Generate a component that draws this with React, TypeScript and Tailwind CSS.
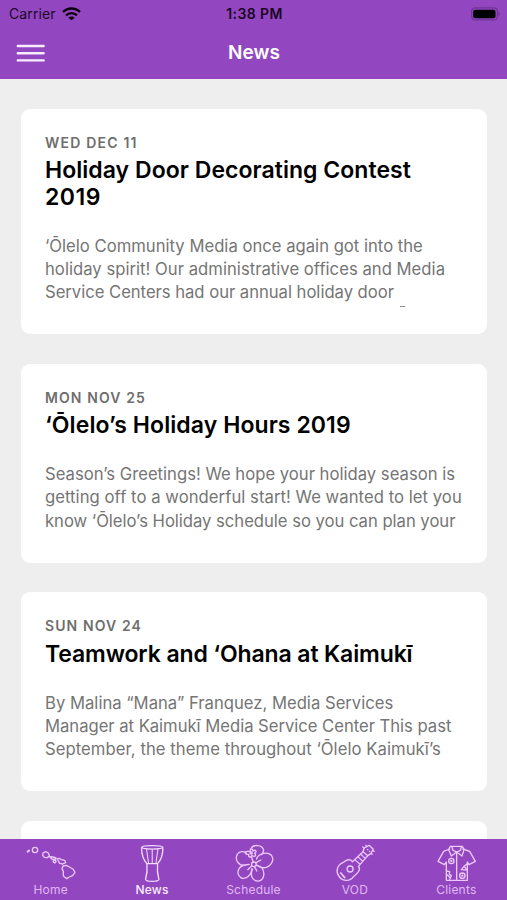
import type { ReactNode } from "react";
import { clsx } from "clsx";

type Line = { text: string; tracking?: string };

type NewsItem = {
  date: Line;
  title: Line[];
  body: Line[];
  overflow?: boolean;
};

const newsItems: NewsItem[] = [
  {
    date: { text: "WED DEC 11", tracking: "tracking-[1.2px]" },
    title: [
      { text: "Holiday Door Decorating Contest", tracking: "tracking-[0.04px]" },
      { text: "2019", tracking: "tracking-[0.5px]" },
    ],
    body: [
      { text: "‘Ōlelo Community Media once again got into the" },
      { text: "holiday spirit! Our administrative offices and Media", tracking: "tracking-[0.02px]" },
      { text: "Service Centers had our annual holiday door", tracking: "tracking-[-0.03px]" },
    ],
    overflow: true,
  },
  {
    date: { text: "MON NOV 25", tracking: "tracking-[1.1px]" },
    title: [{ text: "‘Ōlelo’s Holiday Hours 2019", tracking: "tracking-[0.08px]" }],
    body: [
      { text: "Season’s Greetings! We hope your holiday season is" },
      { text: "getting off to a wonderful start! We wanted to let you", tracking: "tracking-[0.045px]" },
      { text: "know ‘Ōlelo’s Holiday schedule so you can plan your", tracking: "tracking-[-0.03px]" },
    ],
  },
  {
    date: { text: "SUN NOV 24", tracking: "tracking-[1.1px]" },
    title: [{ text: "Teamwork and ‘Ohana at Kaimukī", tracking: "tracking-[-0.12px]" }],
    body: [
      { text: "By Malina “Mana” Franquez, Media Services" },
      { text: "Manager at Kaimukī Media Service Center This past", tracking: "tracking-[-0.03px]" },
      { text: "September, the theme throughout ‘Ōlelo Kaimukī’s", tracking: "tracking-[0.055px]" },
    ],
  },
];

const StatusBar = () => (
  <div className="flex h-7 items-center justify-between pl-[9px] pr-[7px] text-sm text-[#1b0a26]">
    <div className="flex flex-1 items-center gap-[6px]">
      <span className="tracking-[0.1px]">Carrier</span>
      <svg className="mb-px h-[14px] w-[19px]" viewBox="0 0 57 42" fill="none" stroke="#0b0210" strokeWidth="7">
        <path d="M3 15C17 1 40 1 54 15" />
        <path d="M12 25C21 16 36 16 45 25" />
        <path d="M28.500 40L19 32C24 27 33 27 38 32Z" fill="#0b0210" stroke="none" />
      </svg>
    </div>
    <span className="font-semibold tracking-[0.4px] text-[#1b0424]">1:38 PM</span>
    <div className="flex flex-1 justify-end">
      <svg className="mb-px h-[14px] w-[29px]" viewBox="0 0 29 14" fill="none">
        <rect x="0.600" y="0.900" width="25.800" height="12" rx="3.500" stroke="#6f3494" strokeWidth="1.200" />
        <rect x="2.200" y="2.700" width="22.300" height="8.600" rx="2" fill="#000" />
        <path d="M27.500 5v4c1.800-.8 1.800-3.200 0-4Z" fill="#6f3494" />
      </svg>
    </div>
  </div>
);

const NavBar = () => (
  <div className="flex h-[49px] items-center justify-between px-4">
    <button type="button" aria-label="Menu">
      <svg className="h-[18px] w-[29px]" viewBox="0 0 29 18" stroke="#f8eeff" strokeWidth="2.4" strokeLinecap="round">
        <path d="M1.800 2H27.600M1.800 9.200H27.600M1.800 16.400H27.600" />
      </svg>
    </button>
    <h1 className="mt-[2px] text-[19px] font-semibold text-white">News</h1>
    <div className="w-7" />
  </div>
);

const TextLines = ({ lines }: { lines: Line[] }) =>
  lines.map((line) => (
    <span key={line.text} className={clsx("block whitespace-nowrap", line.tracking)}>
      {line.text}
    </span>
  ));

const NewsCard = ({ item }: { item: NewsItem }) => (
  <article
    className={clsx(
      "shrink-0 rounded-[9px] bg-white px-[24.500px] pt-6",
      item.title.length > 1 ? "h-[225.700px]" : "h-[199px]",
    )}
  >
    <p className={clsx("h-[19px] text-sm leading-[19px] font-semibold text-[#6e6e6e]", item.date.tracking)}>
      {item.date.text}
    </p>
    <h2 className="mt-[5.700px] text-[23px] leading-[26.700px] font-semibold text-black">
      <TextLines lines={item.title} />
    </h2>
    <div className="mt-6 text-[16.670px] leading-[23.300px] text-[#757575]">
      <TextLines lines={item.body} />
      {/* top of the clipped fourth line */}
      {item.overflow && <div className="mt-[1.500px] ml-[355px] h-px w-[5px] bg-[#8a8a8a]" />}
    </div>
  </article>
);

const HomeIcon = () => (
  <>
    <path d="M53 47L57 44" strokeWidth="6" />
    <circle cx="75" cy="42" r="8" />
    <path d="M99 51l8-4 8 4 3 8-6 6-9-1-5-6Z" />
    <path d="M119 62l10 1 9 3-3 4-10-1Z" />
    <path d="M130 73l6-1 2 5-4 4-4-3Z" />
    <path d="M141 69l6-2 7 4 10 2 3 7-9 4-9-2-4-7Z" />
    <path d="M159 90L169 88L178 93L189 99L195 109L188 119L178 123L170 128L160 120L160 106L156 98Z" />
  </>
);

const NewsIcon = () => (
  <>
    <path d="M96 34C96 27 158 27 158 34C158 41 96 41 96 34Z" />
    <path d="M95 35C95 54 101 72 111 83H143C153 72 159 54 159 35" />
    <path d="M110 40L116 82M127 41V82M144 40L138 82" strokeWidth="3" />
    <path d="M111 84C113 101 111 116 107 130C109 138 145 138 147 130C143 116 141 101 143 84" />
  </>
);

const ScheduleIcon = () => (
  <>
    <path d="M122 38C127 24 155 26 159 41C160 48 157 52 153 56" />
    <path d="M138 69C143 52 174 44 184 60C193 76 177 97 155 95C147 94 143 90 139 87" />
    <path d="M153 94C165 109 161 132 145 135C127 137 117 119 126 99" />
    <path d="M124 99C123 118 104 134 90 124C76 113 82 91 103 87L116 85" />
    <path d="M103 88C84 90 72 71 80 56C86 45 99 45 107 51" />
    <circle cx="130" cy="85" r="7" />
    <path d="M128 77L122 61M137 80L151 72M138 88L150 92M133 94L139 105M123 90L112 101" />
    <path d="M119 47C117 37 126 36 127 45C135 39 141 47 132 52C140 58 131 65 125 58C122 67 112 64 115 55C103 57 101 45 111 46Z" />
    <circle cx="122" cy="51" r="3" />
  </>
);

const VodIcon = () => (
  <>
    <path d="M127 77C120 67 109 71 100 79C81 86 77 105 85 118C94 136 119 139 130 122C142 112 154 101 145 91" />
    <circle cx="120" cy="99" r="9" />
    <path d="M92 111L104 125" strokeWidth="5" />
    <path d="M127 77L159 47M145 91L173 59" />
    <path d="M159 47L162 36L177 28L189 39L183 52L173 59Z" />
    <path d="M134 71L149 84M143 62L157 75M152 54L165 67" strokeWidth="3.500" />
    <path d="M162 36L158 33M170 32L167 28M189 44L192 46M183 52L186 55M172 41L173 41M178 46L179 46" />
  </>
);

const ClientsIcon = () => (
  <>
    <path d="M120 39L102 46L85 76L104 86L110 78V133H173V78L178 86L197 76L180 46L160 39" />
    <path d="M122 31H158L163 41L157 60L141 48L125 60L117 41Z" />
    <path d="M127 33L130 43L141 48L152 43L155 33M141 48V133" />
    <circle cx="125" cy="75" r="8" />
    <circle cx="158" cy="119" r="8" />
    <path d="M172 84L163 91L155 101L172 102M164 92L170 98" />
    <path d="M111 105L120 107L119 115L125 119L120 130M112 116L120 124" />
    <circle cx="125" cy="75" r="1.500" />
    <circle cx="158" cy="119" r="1.500" />
  </>
);

const tabs: { label: string; viewBox: string; icon: ReactNode; isActive?: boolean }[] = [
  { label: "Home", viewBox: "33 21 180 120", icon: <HomeIcon /> },
  { label: "News", viewBox: "36.3 21 180 120", icon: <NewsIcon />, isActive: true },
  { label: "Schedule", viewBox: "40.5 21 180 120", icon: <ScheduleIcon /> },
  { label: "VOD", viewBox: "44.7 21 180 120", icon: <VodIcon /> },
  { label: "Clients", viewBox: "49 21 180 120", icon: <ClientsIcon /> },
];

const TabBar = () => (
  <nav className="flex h-[61.500px] shrink-0 bg-[#9247c1] pt-[4.500px]">
    {tabs.map((tab) => (
      <button
        type="button"
        key={tab.label}
        className={clsx(
          "flex flex-1 flex-col items-center",
          tab.isActive ? "font-medium text-[#fbeeff]" : "font-normal text-[#e0b8f3]",
        )}
      >
        <svg
          className="h-10 w-[60px] shrink-0"
          viewBox={tab.viewBox}
          fill="none"
          stroke={tab.isActive ? "#f3dcff" : "#ecc8fb"}
          strokeWidth="4"
          strokeLinecap="round"
          strokeLinejoin="round"
        >
          {tab.icon}
        </svg>
        <span className="-mt-px text-xs leading-[15px] tracking-[0.200px]">{tab.label}</span>
      </button>
    ))}
  </nav>
);

export default function App() {
  return (
    <div className="flex h-[900px] w-[507px] flex-col overflow-hidden bg-[#eeeeee] font-['Inter','Liberation_Sans',sans-serif]">
      <header className="h-[79px] shrink-0 bg-[#9247c1]">
        <StatusBar />
        <NavBar />
      </header>
      <main className="flex min-h-0 flex-1 flex-col gap-[29.500px] overflow-hidden px-[20.500px] pt-[29.500px]">
        {newsItems.map((item) => (
          <NewsCard key={item.date.text} item={item} />
        ))}
        <div className="h-[199px] shrink-0 rounded-[9px] bg-white" />
      </main>
      <TabBar />
    </div>
  );
}
